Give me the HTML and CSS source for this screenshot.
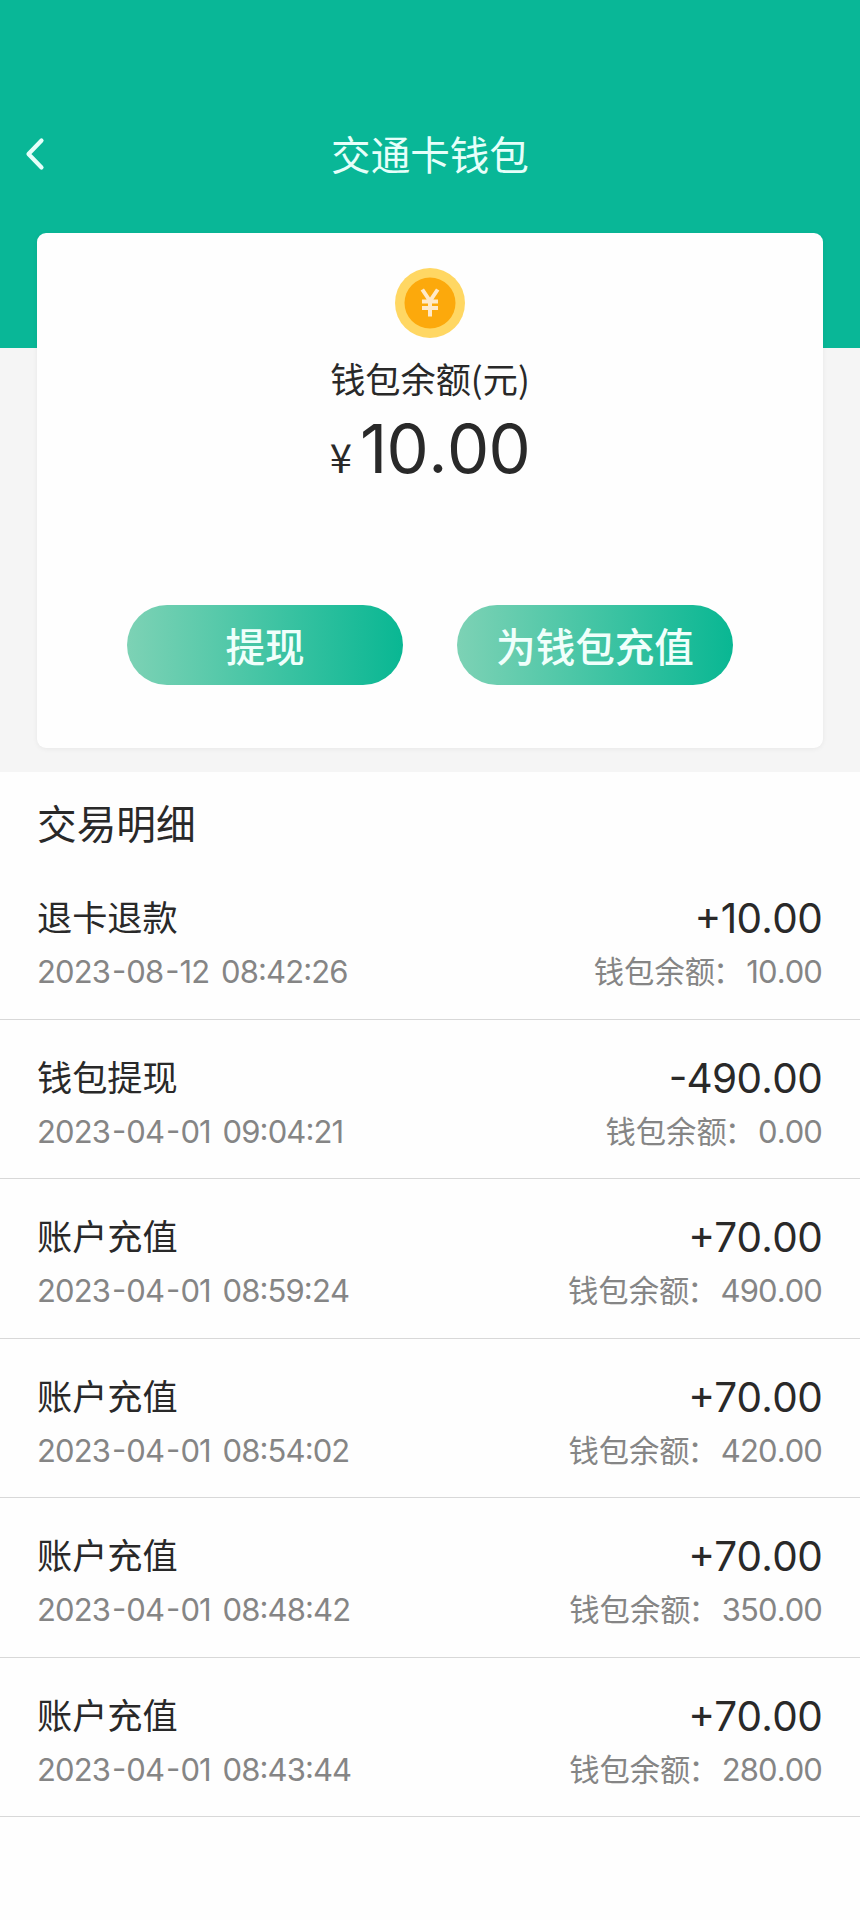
FILE: index.html
```html
<!DOCTYPE html>
<html lang="zh-CN">
<head>
<meta charset="utf-8">
<title>交通卡钱包</title>
<link rel="stylesheet" href="styles.css">
</head>
<body>
<div class="hero">
  <header class="nav">
    <svg class="back" width="20" height="34" viewBox="0 0 20 34"><path d="M16.500 3.500 3.500 17l13 13.500" fill="none" stroke="#e6fffa" stroke-width="4.200" stroke-linecap="round" stroke-linejoin="round"/></svg>
    <h1 class="title">交通卡钱包</h1>
  </header>
  <section class="card">
    <svg class="coin" width="72" height="72" viewBox="0 0 72 72"><circle cx="36" cy="36" r="35" fill="#ffd763"/><circle cx="36" cy="36" r="25.5" fill="#fca90c"/><path d="M28.3 22.5 36 34l7.700-11.500M28 34.500h16M28 41h16M36 34v15.500" fill="none" stroke="#ffe9c9" stroke-width="4"/></svg>
    <div class="label">钱包余额(元)</div>
    <div class="balance"><span class="yen">¥</span><span class="sum">10.00</span></div>
    <div class="actions">
      <button class="btn">提现</button>
      <button class="btn">为钱包充值</button>
    </div>
  </section>
</div>
<main class="list">
  <h2 class="heading">交易明细</h2>
  <div class="row first"><div class="line"><span class="name">退卡退款</span><span class="amount">+10.00</span></div><div class="line sub"><span class="date">2023<i>-</i>08<i>-</i>12 08:42:26</span><span class="rest">钱包余额<b>：</b><span class="num">10.00</span></span></div></div>
  <div class="row"><div class="line"><span class="name">钱包提现</span><span class="amount">-490.00</span></div><div class="line sub"><span class="date">2023<i>-</i>04<i>-</i>01 09:04:21</span><span class="rest">钱包余额<b>：</b><span class="num">0.00</span></span></div></div>
  <div class="row"><div class="line"><span class="name">账户充值</span><span class="amount">+70.00</span></div><div class="line sub"><span class="date">2023<i>-</i>04<i>-</i>01 08:59:24</span><span class="rest">钱包余额<b>：</b><span class="num">490.00</span></span></div></div>
  <div class="row"><div class="line"><span class="name">账户充值</span><span class="amount">+70.00</span></div><div class="line sub"><span class="date">2023<i>-</i>04<i>-</i>01 08:54:02</span><span class="rest">钱包余额<b>：</b><span class="num">420.00</span></span></div></div>
  <div class="row"><div class="line"><span class="name">账户充值</span><span class="amount">+70.00</span></div><div class="line sub"><span class="date">2023<i>-</i>04<i>-</i>01 08:48:42</span><span class="rest">钱包余额<b>：</b><span class="num">350.00</span></span></div></div>
  <div class="row"><div class="line"><span class="name">账户充值</span><span class="amount">+70.00</span></div><div class="line sub"><span class="date">2023<i>-</i>04<i>-</i>01 08:43:44</span><span class="rest">钱包余额<b>：</b><span class="num">280.00</span></span></div></div>
</main>
</body>
</html>
```
FILE: styles.css
```css
* { box-sizing: border-box; }
body {
  margin: 0;
  min-height: 1920px;
  background: #fefefe;
  color: #292929;
  font-family: "Noto Sans CJK SC", sans-serif;
}
h1, h2 { margin: 0; font-weight: 400; }
.hero {
  height: 772px;
  padding: 77px 37px 0;
  background: linear-gradient(#09b797 348px, #f5f5f5 348px);
}
.nav {
  display: grid;
  grid-template-columns: 1fr auto 1fr;
  align-items: center;
  height: 156px;
}
.back { margin-left: -12px; margin-top: -2px; }
.title { margin-top: -4px; font-size: 39.6px; line-height: 60px; color: #e6fffa; }
.card {
  display: flex;
  flex-direction: column;
  align-items: center;
  height: 515px;
  padding-top: 34px;
  border-radius: 9px;
  background: #fefefe;
  box-shadow: 0 1px 5px rgba(0, 0, 0, .06);
}
.coin { display: block; }
.label { margin-top: 13px; font-size: 35.2px; line-height: 52px; }
.balance {
  display: flex;
  align-items: baseline;
  gap: 8px;
  height: 80px;
  margin-top: 5px;
  line-height: 80px;
}
.yen { font-size: 40px; line-height: 76px; }
.sum { font-family: Inter, sans-serif; font-size: 67px; font-kerning: none; letter-spacing: -.6px; }
.actions { display: flex; gap: 54px; margin-top: 116px; }
.btn {
  width: 276px;
  height: 80px;
  padding: 0;
  border: 0;
  border-radius: 40px;
  background: linear-gradient(90deg, #7dd2b5, #09b793);
  color: #f0fffb;
  font: 500 39.6px/80px "Noto Sans CJK SC", sans-serif;
}
.heading { padding: 20px 37px 2px; font-size: 39.7px; line-height: 60px; }
.row {
  height: 159.4px;
  padding: 29px 38px 0 37px;
  border-bottom: 1px solid #d8d8d8;
}
.first { height: 166px; padding-top: 35px; }
.line {
  display: flex;
  justify-content: space-between;
  align-items: baseline;
  height: 54px;
  line-height: 54px;
}
.name { font-size: 35.2px; }
.amount {
  position: relative;
  top: 2px;
  font-family: Inter, sans-serif;
  font-size: 40.5px;
  font-feature-settings: "case";
  font-kerning: none;
  letter-spacing: -.7px;
}
.sub { color: #858585; }
.date, .num {
  font-family: Inter, sans-serif;
  font-size: 31px;
  font-feature-settings: "case";
  font-kerning: none;
  letter-spacing: -.9px;
}
.date { word-spacing: 4px; }
.date i { padding: 0 1px 0 2px; font-style: normal; }
.rest { font-size: 30.3px; }
.rest b { margin: 0 3px 0 -2px; font-weight: 400; }
```
